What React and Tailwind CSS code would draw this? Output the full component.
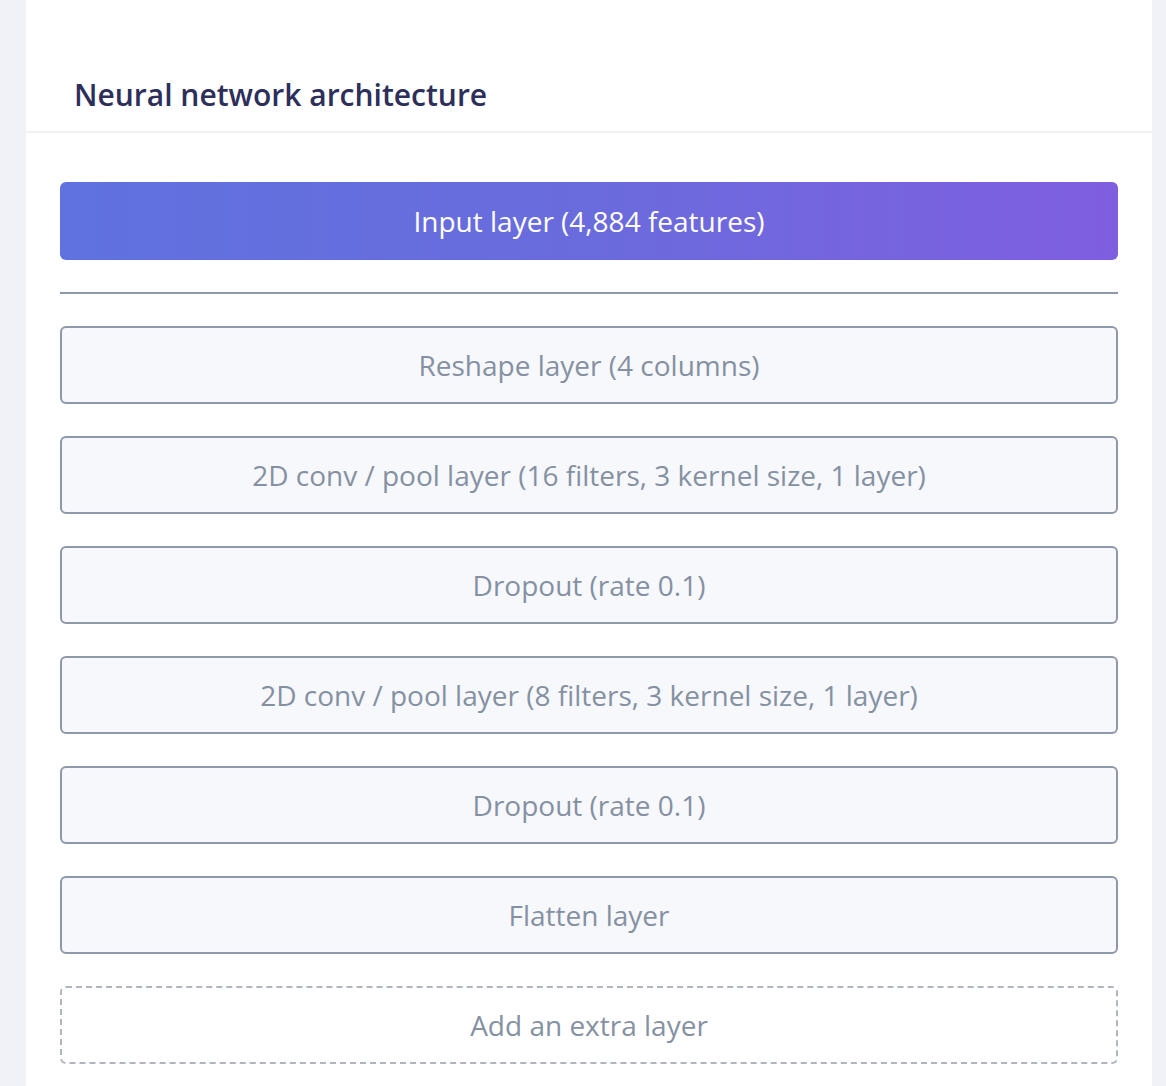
export default function App() {
  const layers = [
    "Reshape layer (4 columns)",
    "2D conv / pool layer (16 filters, 3 kernel size, 1 layer)",
    "Dropout (rate 0.1)",
    "2D conv / pool layer (8 filters, 3 kernel size, 1 layer)",
    "Dropout (rate 0.1)",
    "Flatten layer",
  ];
  return (
    <div
      className="w-[1166px] h-[1086px] overflow-hidden bg-[#f1f2f7] pl-[26px] pr-[14px]"
      style={{ fontFamily: '"Open Sans", "Noto Sans", sans-serif' }}
    >
      <div className="bg-white h-full">
        <div className="pt-[77px] pb-[18px] pl-[48px] border-b-2 border-[#f1f2f5]">
          <h2 className="text-[30px] leading-[36px] font-semibold text-[#2d2e5a]">
            Neural network architecture
          </h2>
        </div>
        <div className="px-[34px] pt-[49px] flex flex-col">
          <div className="h-[78px] rounded-[6px] bg-gradient-to-r from-[#5f72df] via-[#6a6bdd] to-[#7f5ee0] flex items-center justify-center text-white text-[28px]">
            Input layer (4,884 features)
          </div>
          <div className="mt-[32px] h-[2px] bg-[#8d98a8]" />
          <div className="mt-[32px] flex flex-col gap-[32px]">
            {layers.map((l, i) => (
              <div
                key={i}
                className="h-[78px] rounded-[6px] border-2 border-[#8d98a8] bg-[#f7f8fb] flex items-center justify-center text-[#8591a3] text-[28px]"
              >
                {l}
              </div>
            ))}
            <div className="h-[78px] rounded-[6px] border-2 border-dashed border-[#b0b5be] bg-white flex items-center justify-center text-[#8591a3] text-[28px]">
              Add an extra layer
            </div>
          </div>
        </div>
      </div>
    </div>
  );
}
